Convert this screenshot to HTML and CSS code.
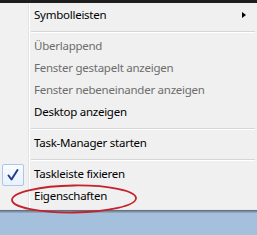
FILE: index.html
```html
<!DOCTYPE html>
<html>
<head>
<meta charset="utf-8">
<link rel="stylesheet" href="styles.css">
</head>
<body>
<div class="menu">
  <div class="item sub">Symbolleisten<span class="arrow"></span></div>
  <div class="sep"></div>
  <div class="item dis">Überlappend</div>
  <div class="item dis">Fenster gestapelt anzeigen</div>
  <div class="item dis">Fenster nebeneinander anzeigen</div>
  <div class="item">Desktop anzeigen</div>
  <div class="sep"></div>
  <div class="item">Task-Manager starten</div>
  <div class="sep"></div>
  <div class="item checked"><span class="check"><svg width="20" height="20" viewBox="0 0 20 20"><path d="M5.5 10.5 L8.5 14.5 L14.5 5" fill="none" stroke="#1f3e8e" stroke-width="2" stroke-linejoin="round" stroke-linecap="round"/></svg></span>Taskleiste fixieren</div>
  <div class="item">Eigenschaften</div>
  <svg class="circle" width="130" height="34" viewBox="0 0 130 34"><ellipse cx="64" cy="16" rx="62" ry="13.5" fill="none" stroke="#c4222c" stroke-width="1.8" transform="rotate(-0.8 64 16)"/></svg>
</div>
<div class="shadow"></div>
</body>
</html>
```
FILE: styles.css
```css
html, body {
  margin: 0;
  padding: 0;
}
body {
  width: 257px;
  height: 235px;
  background: #a4c0dc;
  font-family: "Noto Sans", "Open Sans", sans-serif;
  font-size: 11.5px;
  letter-spacing: -0.25px;
  overflow: hidden;
}
.menu {
  position: relative;
  z-index: 1;
  border-top: 3px solid #1e1e1e;
  padding: 1px 0 2px;
  background: linear-gradient(to right, #f1f1f1 0 28px, #e2e3e3 28px 29px, #ffffff 29px 30px, #f0f0f0 30px);
  border-bottom: 1px solid #e4eaf1;
}
.item {
  position: relative;
  height: 22px;
  line-height: 22px;
  padding-left: 34px;
  color: #000;
  white-space: nowrap;
}
.item.dis {
  color: #6d6d6d;
}
.arrow {
  position: absolute;
  right: 11px;
  top: 8px;
  width: 0;
  height: 0;
  border-top: 3.5px solid transparent;
  border-bottom: 3.5px solid transparent;
  border-left: 4px solid #000;
}
.sep {
  height: 1px;
  margin: 5px 2px 2px 31px;
  background: #d7d7d7;
  border-bottom: 1px solid #ffffff;
}
.check {
  position: absolute;
  left: 2px;
  top: 1px;
  width: 20px;
  height: 20px;
  border: 1px solid #a8c7ea;
  border-radius: 2px;
  background: linear-gradient(#fafcff, #e8f1fb);
}
.check svg {
  display: block;
}
.circle {
  position: absolute;
  left: 10px;
  top: 180px;
}
.shadow {
  height: 3px;
  background: linear-gradient(#59626d, #7f8fa1, #98b1cb);
}
```
